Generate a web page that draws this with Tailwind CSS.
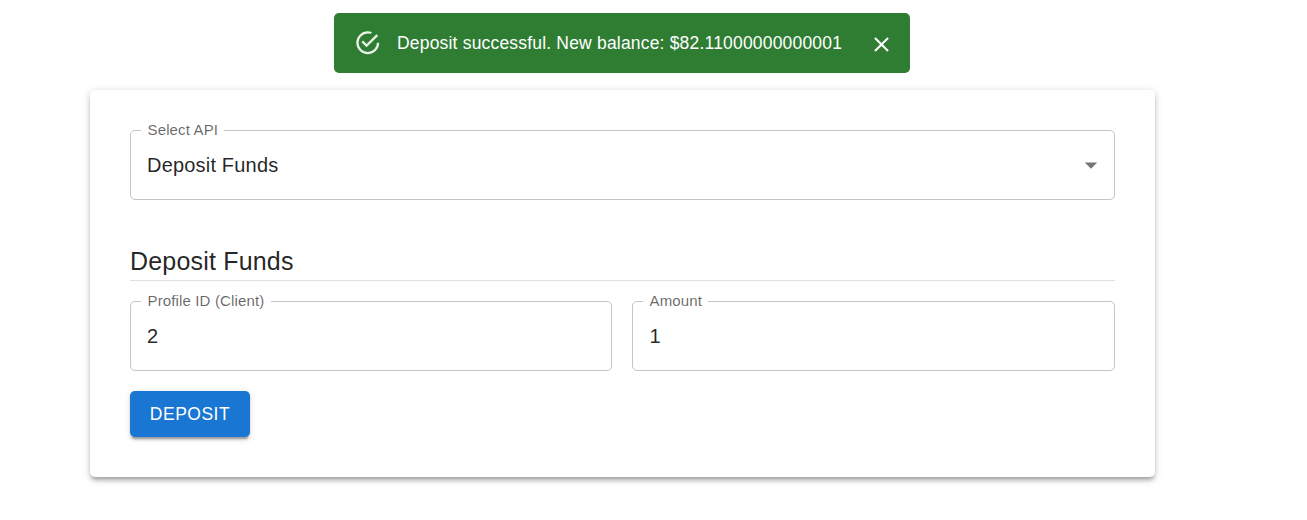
<!DOCTYPE html>
<html lang="en">
<head>
<meta charset="utf-8">
<title>Deposit Funds</title>
<script src="https://cdn.jsdelivr.net/npm/@tailwindcss/browser@4"></script>
</head>
<body class="bg-white font-['Liberation_Sans',Arial,sans-serif] text-black/87 min-h-screen">
<div class="ml-[90px] w-[1065px] pt-[13px] flex flex-col items-center">
  <div role="alert" class="w-[575.5px] h-[60px] mr-[1.5px] rounded-[5px] bg-[#2e7d32] text-white flex items-center pl-5 pr-[15px]">
    <svg class="w-[27.5px] h-[27.5px] shrink-0 opacity-90 mr-[15.5px]" viewBox="0 0 24 24" fill="currentColor"><path d="M20,12A8,8 0 0,1 12,20A8,8 0 0,1 4,12A8,8 0 0,1 12,4C12.76,4 13.5,4.11 14.2,4.31L15.77,2.74C14.61,2.26 13.34,2 12,2A10,10 0 0,0 2,12A10,10 0 0,0 12,22A10,10 0 0,0 22,12M7.91,10.08L6.5,11.5L11,16L21,6L19.59,4.58L11,13.17L7.91,10.08Z"/></svg>
    <span class="text-[17.5px] leading-[25px] tracking-[0.01071em] whitespace-nowrap">Deposit successful. New balance: $82.11000000000001</span>
    <button class="ml-auto p-[1px] mt-[3px]" aria-label="Close"><svg class="w-[25px] h-[25px] block" viewBox="0 0 24 24" fill="currentColor"><path d="M19 6.41L17.59 5 12 10.59 6.41 5 5 6.41 10.59 12 5 17.59 6.41 19 12 13.41 17.59 19 19 17.59 13.41 12z"/></svg></button>
  </div>
  <main class="mt-[17px] w-full h-[387px] rounded-[5px] bg-white px-10 pt-[32px] shadow-[0_3.75px_3.75px_-2.5px_rgba(0,0,0,0.2),0_3.75px_5px_0_rgba(0,0,0,0.14),0_1.25px_10px_0_rgba(0,0,0,0.12)]">
    <fieldset class="h-[78px] border border-[#c4c4c4] rounded-[5px] px-[10px]">
      <legend class="h-[17px] pl-[6.5px] pr-[5.5px] text-[15px] leading-[15px] tracking-[0.00938em] text-black/60">Select API</legend>
      <div class="h-[52px] flex items-center justify-between pl-[6px]">
        <span class="text-[20px] leading-[28px] tracking-[0.00938em]">Deposit Funds</span>
        <svg class="w-[30px] h-[30px] -mr-0.5 text-black/54" viewBox="0 0 24 24" fill="currentColor"><path d="M7 10l5 5 5-5z"/></svg>
      </div>
    </fieldset>
    <h6 class="mt-10 h-[41px] border-b border-[#e0e0e0] text-[25px] leading-[42px] tracking-[0.0075em]">Deposit Funds</h6>
    <div class="mt-[12px] grid grid-cols-[482px_483px] gap-5">
      <fieldset class="h-[78px] border border-[#c4c4c4] rounded-[5px] px-[10px]">
        <legend class="h-[17px] px-[6.5px] text-[15px] leading-[15px] tracking-[0.00938em] text-black/60">Profile ID (Client)</legend>
        <div class="h-[52px] flex items-center pl-[6px] text-[20px] tracking-[0.00938em]">2</div>
      </fieldset>
      <fieldset class="h-[78px] border border-[#c4c4c4] rounded-[5px] px-[10px]">
        <legend class="h-[17px] pl-[6.5px] pr-[5.5px] text-[15px] leading-[15px] tracking-[0.00938em] text-black/60">Amount</legend>
        <div class="h-[52px] flex items-center pl-[6.5px] text-[20px] tracking-[0.00938em]">1</div>
      </fieldset>
    </div>
    <button class="mt-5 w-[120px] h-[46px] block rounded-[5px] bg-[#1976d2] text-white text-[17.5px] tracking-[0.02857em] shadow-[0_3.75px_1.25px_-2.5px_rgba(0,0,0,0.2),0_2.5px_2.5px_0_rgba(0,0,0,0.14),0_1.25px_6.25px_0_rgba(0,0,0,0.12)]">DEPOSIT</button>
  </main>
</div>
</body>
</html>
